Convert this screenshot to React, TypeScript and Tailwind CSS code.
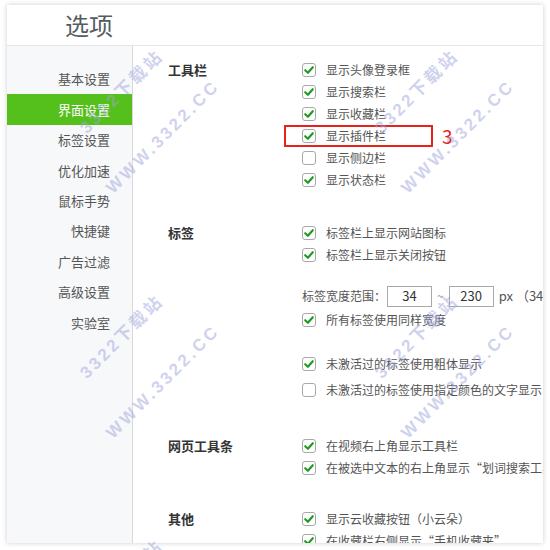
import type { ReactNode } from "react";

const font = { fontFamily: '"Microsoft YaHei", "Noto Sans CJK SC", "Liberation Sans", sans-serif' };

const menu = ["基本设置", "界面设置", "标签设置", "优化加速", "鼠标手势", "快捷键", "广告过滤", "高级设置", "实验室"];

const Box = ({ on }: { on: boolean }) => (
  <span className="flex h-[14px] w-[14px] shrink-0 items-center justify-center rounded-[3px] border border-[#a9a9a9] bg-white">
    {on && (
      <svg width="12" height="12" viewBox="0 0 12 12">
        <path d="M2.2 6.2 L4.9 8.8 L9.8 3.2" fill="none" stroke="#1c9a1c" strokeWidth="2.1" strokeLinecap="round" strokeLinejoin="round" />
      </svg>
    )}
  </span>
);

const Opt = ({ on = true, children, className = "" }: { on?: boolean; children: ReactNode; className?: string }) => (
  <div className={`relative flex h-[22px] items-center gap-[10px] whitespace-nowrap ${className}`}>
    <Box on={on} />
    <span>{children}</span>
  </div>
);

const Section = ({ title, className = "", children }: { title: string; className?: string; children: ReactNode }) => (
  <div className={`grid grid-cols-[134px_1fr] ${className}`}>
    <div className="flex h-[22px] items-center text-[13px] font-bold text-[#333]">{title}</div>
    <div className="flex flex-col">{children}</div>
  </div>
);

const marks = [
  { x: 122, y: 92, t: "3322下载站" },
  { x: 163, y: 137, t: "WWW.3322.CC" },
];
const tiles = [
  [0, 0],
  [295, 0],
  [0, 245],
  [295, 245],
  [0, 490],
];

export default function App() {
  return (
    <div className="relative h-[550px] w-[550px] overflow-hidden bg-white pl-[7px] pt-[5px]" style={font}>
      <div className="flex h-[538px] w-[536px] flex-col overflow-hidden bg-white shadow-[0_0_5px_rgba(0,0,0,0.2)]">
        <div className="flex h-[41px] shrink-0 items-center border-b border-[#e6e6e6] pl-[58px] text-[24px] text-[#555b63]">
          选项
        </div>
        <div className="flex min-h-0 flex-1">
          <div className="w-[126px] shrink-0 border-r border-[#d9d9d9] bg-[#f7f8f9] pt-[18px]">
            {menu.map((m) => (
              <div
                key={m}
                className={`flex h-[30.4px] items-center justify-end pr-[22px] text-[13px] ${
                  m === "界面设置" ? "bg-[#55bf1b] text-white" : "text-[#555]"
                }`}
              >
                {m}
              </div>
            ))}
          </div>
          <div className="min-w-0 flex-1 overflow-hidden pl-[35px] pt-[13px] text-[12px] text-[#555]">
            <Section title="工具栏">
              <Opt>显示头像登录框</Opt>
              <Opt>显示搜索栏</Opt>
              <Opt>显示收藏栏</Opt>
              <Opt>
                显示插件栏
                <span className="pointer-events-none absolute left-[-18px] top-0 h-[22px] w-[149px] border-2 border-[#e5231b]" />
                <span className="absolute left-[140px] top-[-2px] text-[19px] leading-[26px] text-[#e5231b]">3</span>
              </Opt>
              <Opt on={false}>显示侧边栏</Opt>
              <Opt>显示状态栏</Opt>
            </Section>
            <Section title="标签" className="mt-[31px]">
              <Opt>标签栏上显示网站图标</Opt>
              <Opt>标签栏上显示关闭按钮</Opt>
              <div className="mt-[19px] flex h-[22px] items-center whitespace-nowrap">
                <span>标签宽度范围：</span>
                <span className="ml-[1px] flex h-[21px] w-[45px] items-center justify-center border border-[#a9a9a9] text-[13px] text-[#333]">34</span>
                <span className="mx-[5px] text-[#888]">~</span>
                <span className="flex h-[21px] w-[45px] items-center justify-center border border-[#a9a9a9] text-[13px] text-[#333]">230</span>
                <span className="ml-[5px] text-[13px]">px （34-</span>
              </div>
              <Opt className="mt-[2px]">所有标签使用同样宽度</Opt>
              <Opt className="mt-[22px]">未激活过的标签使用粗体显示</Opt>
              <Opt on={false} className="mt-[4px]">未激活过的标签使用指定颜色的文字显示：</Opt>
            </Section>
            <Section title="网页工具条" className="mt-[34px]">
              <Opt>在视频右上角显示工具栏</Opt>
              <Opt>在被选中文本的右上角显示“划词搜索工具”</Opt>
            </Section>
            <Section title="其他" className="mt-[29px]">
              <Opt>显示云收藏按钮（小云朵）</Opt>
              <Opt>在收藏栏右侧显示“手机收藏夹”</Opt>
            </Section>
          </div>
        </div>
      </div>
      {tiles.map(([dx, dy]) =>
        marks.map((m) => (
          <span
            key={`${dx}-${dy}-${m.t}`}
            className="pointer-events-none absolute -translate-x-1/2 -translate-y-1/2 -rotate-45 whitespace-nowrap text-[17px] font-bold tracking-[3px] text-[rgba(160,166,220,0.5)]"
            style={{ left: m.x + dx, top: m.y + dy, fontFamily: '"Liberation Sans", "Noto Sans CJK SC", sans-serif' }}
          >
            {m.t}
          </span>
        ))
      )}
    </div>
  );
}
